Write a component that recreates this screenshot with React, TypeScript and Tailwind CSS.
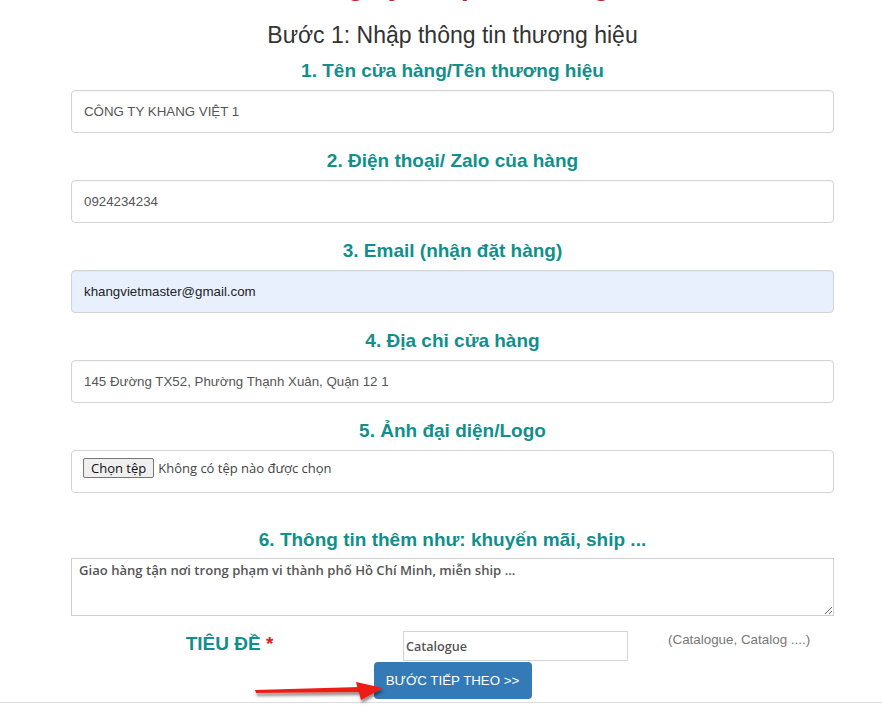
import React from 'react';

const label = "block text-center text-[19px] leading-[20px] font-bold text-[#118f8b]";
const field =
  "block w-full h-[43px] px-[12px] rounded-[4px] border border-[#d4d4d4] bg-white text-[13.3px] text-[#555] outline-none shadow-[inset_0_1px_1px_rgba(0,0,0,0.04)]";

function Group({ title, children, className = '' }: { title: string; children: React.ReactNode; className?: string }) {
  return (
    <div className={className}>
      <div className={label}>{title}</div>
      <div className="mt-[9px]">{children}</div>
    </div>
  );
}

export default function App() {
  return (
    <div className="min-h-screen bg-white font-['Liberation_Sans',Arial,sans-serif]">
      <div className="ml-[71px] w-[763px]">
        {/* red title, mostly scrolled out of view */}
        <div className="h-[6px] overflow-hidden text-center">
          <div className="-mt-[29px] text-[28px] leading-[30px] font-bold text-[#c1272d]">
            Đăng ký shop bán hàng
          </div>
        </div>

        <h2 className="mt-[14px] text-center text-[23px] leading-[30px] text-[#333]">
          Bước 1: Nhập thông tin thương hiệu
        </h2>

        <Group title="1. Tên cửa hàng/Tên thương hiệu" className="mt-[11px]">
          <input className={field} defaultValue="CÔNG TY KHANG VIỆT 1" />
        </Group>

        <Group title="2. Điện thoại/ Zalo của hàng" className="mt-[18px]">
          <input className={field} defaultValue="0924234234" />
        </Group>

        <Group title="3. Email (nhận đặt hàng)" className="mt-[18px]">
          <input className={field + ' !bg-[#e8f0fe] !text-[#222]'} defaultValue="khangvietmaster@gmail.com" />
        </Group>

        <Group title="4. Địa chỉ cửa hàng" className="mt-[18px]">
          <input className={field} defaultValue="145 Đường TX52, Phường Thạnh Xuân, Quận 12 1" />
        </Group>

        <Group title="5. Ảnh đại diện/Logo" className="mt-[18px]">
          <div className="h-[43px] rounded-[4px] border border-[#d4d4d4] px-[11px] pt-[7px] flex items-start gap-[4px] font-['Open_Sans','Noto_Sans',sans-serif] text-[13px] text-[#333]">
            <button className="h-[20px] px-[7px] leading-[18px] rounded-[2px] border border-[#767676] bg-[#efefef] text-[#111]">
              Chọn tệp
            </button>
            <span className="leading-[20px] text-[#444]">Không có tệp nào được chọn</span>
          </div>
        </Group>

        <div className="mt-[37px]">
          <div className={label}>6. Thông tin thêm như: khuyến mãi, ship ...</div>
          <textarea
            className="mt-[8px] block w-full h-[58px] px-[7px] py-[2px] border border-[#d0d0d0] text-[13.1px] font-semibold text-[#555] font-['Open_Sans','Noto_Sans',sans-serif] outline-none"
            defaultValue="Giao hàng tận nơi trong phạm vi thành phố Hồ Chí Minh, miễn ship ..."
          />
        </div>

        <div className="mt-[15px] flex items-start">
          <div className="w-[317px] pt-[3px] text-center text-[19px] leading-[20px] font-bold text-[#118f8b]">
            TIÊU ĐỀ <span className="text-[#e02020]">*</span>
          </div>
          <div className="w-[265px] pl-[15px]">
            <input
              className="block w-[225px] h-[30px] px-[2px] border border-[#d4d4d4] text-[12.6px] font-semibold text-[#555] font-['Open_Sans','Noto_Sans',sans-serif] outline-none"
              defaultValue="Catalogue"
            />
          </div>
          <div className="pl-[15px] text-[13.4px] leading-[18px] text-[#777]">(Catalogue, Catalog ....)</div>
        </div>

        <div className="relative mt-[1px] flex justify-center">
          <button className="w-[158px] h-[37px] rounded-[4px] bg-[#337ab7] text-white text-[13.3px] leading-[37px]">
            BƯỚC TIẾP THEO &gt;&gt;
          </button>
          <svg
            className="absolute left-[179px] top-[16px]"
            width="140"
            height="30"
            viewBox="0 0 140 30"
          >
            <defs>
              <filter id="sh" x="-10%" y="-40%" width="130%" height="200%">
                <feDropShadow dx="1" dy="3" stdDeviation="1.6" floodColor="#000" floodOpacity="0.45" />
              </filter>
            </defs>
            <g filter="url(#sh)">
              <polygon points="5,12 110,9 110,14 6,15" fill="#ee1c12" />
              <polygon points="106,4 133,10 111,22" fill="#ee1c12" />
            </g>
          </svg>
        </div>
      </div>
      <div className="mt-[3px] border-t border-[#dcdcdc]" />
    </div>
  );
}
